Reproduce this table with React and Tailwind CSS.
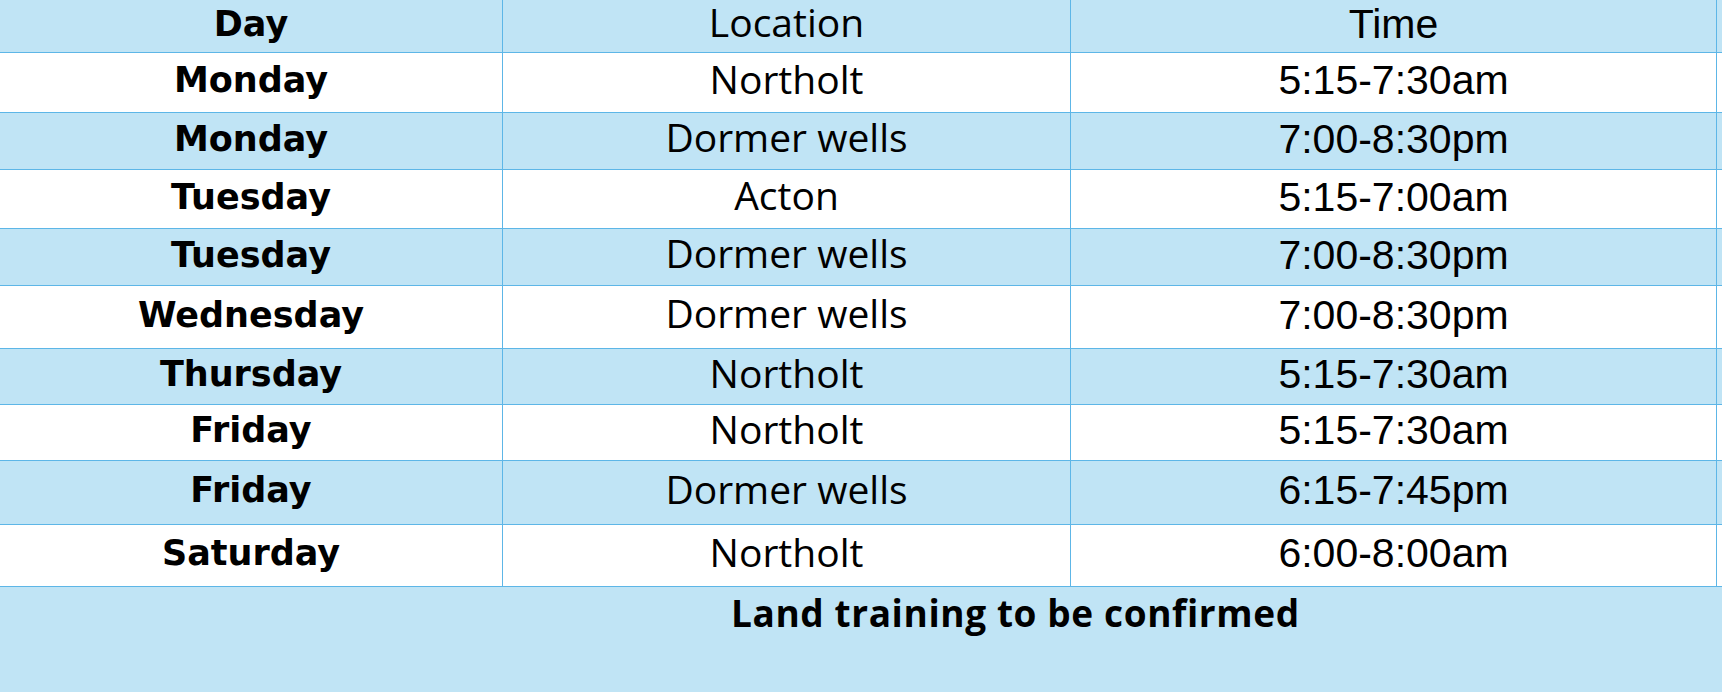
import React from "react";

const rows = [
  { day: "Monday", loc: "Northolt", time: "5:15-7:30am", h: "h-[60px]" },
  { day: "Monday", loc: "Dormer wells", time: "7:00-8:30pm", h: "h-[57px]" },
  { day: "Tuesday", loc: "Acton", time: "5:15-7:00am", h: "h-[59px]" },
  { day: "Tuesday", loc: "Dormer wells", time: "7:00-8:30pm", h: "h-[57px]" },
  { day: "Wednesday", loc: "Dormer wells", time: "7:00-8:30pm", h: "h-[63px]" },
  { day: "Thursday", loc: "Northolt", time: "5:15-7:30am", h: "h-[56px]" },
  { day: "Friday", loc: "Northolt", time: "5:15-7:30am", h: "h-[56px]" },
  { day: "Friday", loc: "Dormer wells", time: "6:15-7:45pm", h: "h-[64px]" },
  { day: "Saturday", loc: "Northolt", time: "6:00-8:00am", h: "h-[62px]" },
];

const dayFont = "font-['DejaVu_Sans',sans-serif] font-bold text-[35px] leading-none pb-1";
const locFont = "font-['Open_Sans',sans-serif] text-[39px] leading-[44px] pb-[8px]";
const timeFont = "font-['Liberation_Sans',Arial,sans-serif] text-[41px] leading-none pb-1";

function Row({ day, loc, time, h, blue }) {
  return (
    <div
      className={`grid grid-cols-[503px_568px_646px_5px] ${h} border-b border-[#5db6e7] text-black ${
        blue ? "bg-[#c0e4f5]" : "bg-white"
      }`}
    >
      <div className={`flex items-center justify-center border-r border-[#5db6e7] ${dayFont}`}>{day}</div>
      <div className={`flex items-center justify-center border-r border-[#5db6e7] ${locFont}`}>{loc}</div>
      <div className={`flex items-center justify-center border-r border-[#5db6e7] ${timeFont}`}>{time}</div>
      <div />
    </div>
  );
}

export default function App() {
  return (
    <div className="w-[1722px] h-[696px] bg-white overflow-hidden">
      <Row day="Day" loc="Location" time="Time" h="h-[53px]" blue />
      {rows.map((r, i) => (
        <Row key={i} {...r} blue={i % 2 === 1} />
      ))}
      <div className="h-[105px] bg-[#c0e4f5] pl-[731px] pt-[7px]">
        <div className="font-['Open_Sans',sans-serif] font-bold text-[37px] leading-[37px] tracking-[0.6px] text-black whitespace-nowrap">
          Land training to be confirmed
        </div>
      </div>
    </div>
  );
}
